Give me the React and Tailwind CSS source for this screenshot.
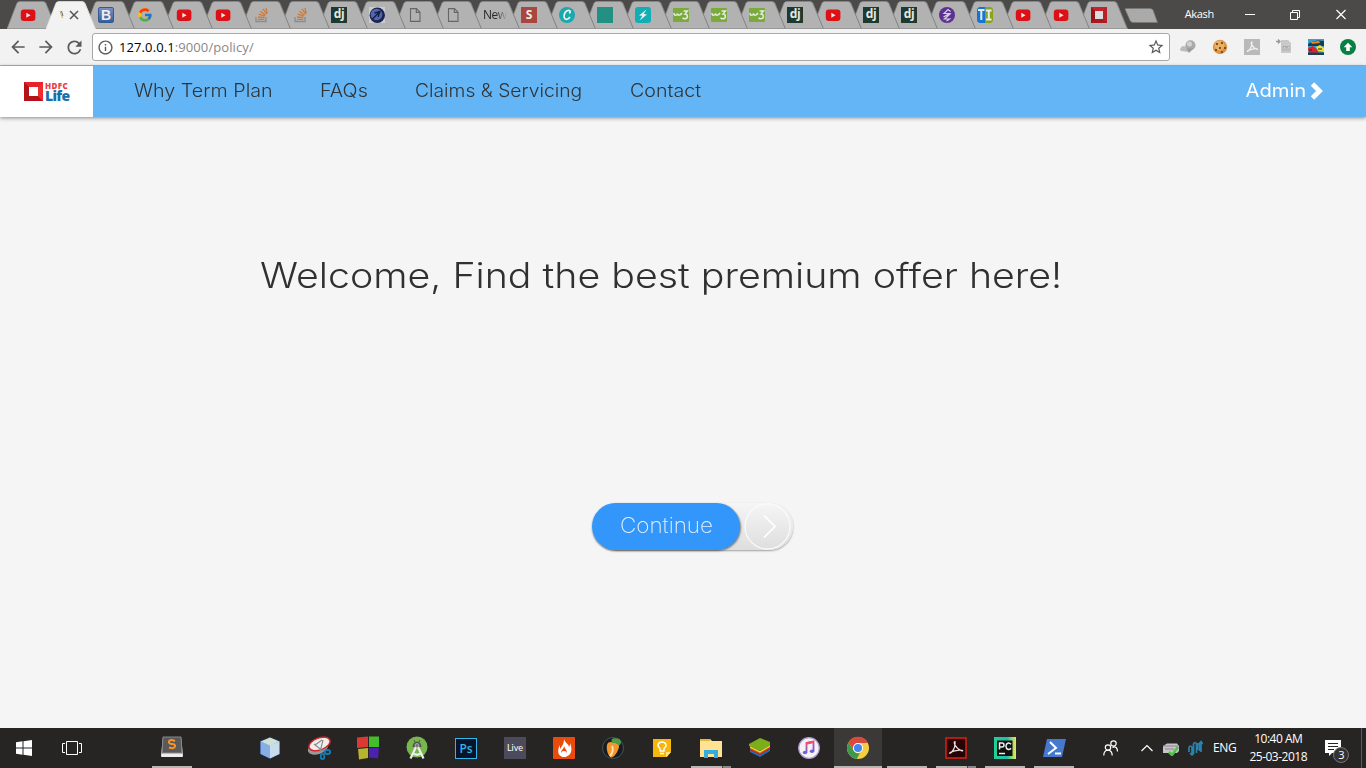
import React from "react";
import { FcGoogle } from "react-icons/fc";
import { MdArrowBack, MdArrowForward, MdRefresh, MdStarBorder, MdInfoOutline } from "react-icons/md";

const Svg = ({ s = 16, vb = "0 0 16 16", children, className = "" }) => (
  <svg width={s} height={s} viewBox={vb} fill="none" className={`shrink-0 ${className}`}>{children}</svg>
);

/* ---------- favicons ---------- */
const YouTube = () => (
  <Svg><rect x="0.800" y="2.500" width="14.600" height="11.500" rx="3" fill="#dd1016" /><path d="M6.300 5.700v5l4.300-2.500z" fill="#f3e4e4" /></Svg>
);
const Django = () => (
  <div className="h-4 w-4 bg-[#20392f] text-center font-['Open_Sans',sans-serif] text-[12px] font-bold leading-[14px] tracking-[-0.3px] text-[#e4e8e6]">dj</div>
);
const Bootstrap = () => (
  <div className="h-4 w-4 rounded-[2px] border border-[#345a94] bg-linear-to-b from-[#7d8cc4] to-[#30609c] text-center font-['Liberation_Sans',sans-serif] text-[14px] font-bold leading-[14px] text-[#eee]">B</div>
);
const Stack = () => (
  <Svg>
    <path d="M2 10v4.500h10V10" stroke="#8c8c8c" strokeWidth="1.300" />
    <path d="M4 12.400h6.300M4 10l6.400.7M4.700 7.200l6 2M6.300 4.300l5.200 4M9 1.900l3.700 5.300M12 .8l1.200 5.800" stroke="#d27a35" strokeWidth="1.300" />
  </Svg>
);
const Page = () => (
  <Svg><path d="M3.500 1.600h6l3.500 3.600v9.200H3.500zM9.300 1.800v3.600h3.500" stroke="#666" strokeWidth="1.100" /></Svg>
);
const Jet = () => (
  <Svg><path d="M0 0h16v16H0z" fill="#ccc" /><circle cx="8.300" cy="8.300" r="7.700" fill="#1c2552" /><circle cx="7.500" cy="7.500" r="5.800" fill="#5268ae" /><path d="M3.500 12l7.500-7.500M5.500 6l5.500-1.500L9 10" stroke="#141c40" strokeWidth="1.300" /></Svg>
);
const Red = () => (
  <div className="h-4 w-4 bg-[#a8463f] text-center font-['Open_Sans',sans-serif] text-[12px] font-bold leading-4 text-[#eee]">S</div>
);
const TealC = () => (
  <Svg><circle cx="8" cy="8" r="8" fill="#18a9ae" /><path d="M10.200 6.300C12.500 4.500 10.500 2.500 8 3.700 4.500 5.500 4 12.300 7.300 12.300c1.500 0 2.700-.8 3.700-2.200" stroke="#e6f1f1" strokeWidth="1.700" /></Svg>
);
const Teal = () => <div className="h-4 w-4 bg-[#229184]" />;
const Bolt = () => (
  <Svg><rect width="16" height="16" rx="3" fill="#14adb3" /><path d="M11.500 2.500L4 8.400l3.400.4L4.500 13.500 12 7.600l-3.400-.5z" fill="#e9f2f2" /></Svg>
);
const W3 = () => (
  <Svg><rect y="1" width="16" height="14" rx="1" fill="#79aa3b" /><path d="M1 6c0 3 3 3 3.400.5C5 9 7.500 8.500 9 6M10.500 4h4L12 7c3 0 3.500 4.800-.5 4.800-.8 0-1.500-.5-1.800-1.200" stroke="#e4ecd9" strokeWidth="1.500" /></Svg>
);
const Purple = () => (
  <Svg><circle cx="8" cy="8" r="8" fill="#5b3191" /><path d="M11.500 4.500L9 2.500 5 6.500h5.500L4.500 10M11.500 6.500L5.500 12h5l-3 2" stroke="#d8cfe2" strokeWidth="1.200" /></Svg>
);
const TI = () => (
  <Svg><path d="M2 0h6v16H2L0 14V2z" fill="#1575d3" /><path d="M8 0h6l2 2v12l-2 2H8z" fill="#89a31b" /><path d="M1 3h6.500M4.300 3v10M9 3.600h5.600M9 12.400h5.600M11.800 3.500v9" stroke="#e7ebee" strokeWidth="2" /></Svg>
);
const Hdfc = () => (
  <Svg><path d="M0 0h16v16H0z" fill="#c3242c" /><path d="M0 0l16 16H0z" fill="#97151c" /><path d="M0 16l16-16v16z" fill="#b31f27" opacity=".6" /><path d="M4 4h8v8H4z" fill="#ddd" /></Svg>
);

const TABS = [
  [39, YouTube], [39, null], [39, Bootstrap], [39, () => <FcGoogle size={16} />], [39, YouTube], [39, YouTube], [39, Stack], [38, Stack],
  [38, Django], [38, Jet], [38, Page], [38, Page], [38, "New"], [38, Red], [38, TealC], [38, Teal], [38, Bolt], [38, W3], [38, W3], [38, W3],
  [38, Django], [38, YouTube], [38, Django], [38, Django], [38, Purple], [38, TI], [38, YouTube], [38, YouTube], [38, Hdfc],
];

function Tab({ width, icon: Icon, index }) {
  const active = index === 1;
  return (
    <div className="relative h-[29px] shrink-0" style={{ width, zIndex: active ? 50 : 40 - index }}>
      <svg width="50" height="29" className="absolute left-0 top-0">
        <path d="M0 29L10 3Q11 1.500 13 1.500H36Q38 1.500 39 3.500L49.500 29z" fill={active ? "#f2f2f2" : "#b2b2b2"} />
        <path d="M0 29L10 3Q11 1.500 13 1.500H36" stroke={active ? "#e8e8e8" : "#8b8b8b"} strokeWidth=".7" fill="none" />
        <path d="M36 1.500Q38 1.500 39 3.500L49.500 29" stroke={active ? "#ddd" : "#828282"} strokeWidth="1" fill="none" />
        {!active && <path d="M0 28.500H49.500" stroke="#999" />}
      </svg>
      <div className="relative flex h-[29px] items-center pl-[13px] pt-[1px]">
        {active ? (
          <>
            <svg width="6" height="14" className="mr-[4px]"><path d="M1 3l2.500 7" stroke="#dfa53c" /><path d="M2.500 3L4 8" stroke="#36527a" strokeWidth=".8" /></svg>
            <Svg s={10} vb="0 0 10 10"><path d="M1 1l8 8M9 1L1 9" stroke="#555" strokeWidth="1.500" /></Svg>
          </>
        ) : Icon === "New" ? (
          <span className="whitespace-nowrap bg-linear-to-r from-[#222] from-50% to-[#b2b2b2] bg-clip-text font-['Open_Sans',sans-serif] text-[12px] leading-4 tracking-[-0.5px] text-transparent">New</span>
        ) : (
          <Icon />
        )}
      </div>
    </div>
  );
}

function TabStrip() {
  return (
    <div className="flex h-[29px] bg-[#4c4a48] pl-[7px]">
      {TABS.map(([w, icon], i) => <Tab key={i} width={w} icon={icon} index={i} />)}
      <svg width="36" height="29" className="ml-[7px] shrink-0">
        <path d="M3 8.500H27Q29 8.500 30 10L34.500 22.500H10Q8 22.500 7 20.500L2 9z" fill="#aaa" stroke="#777" strokeWidth=".6" />
      </svg>
      <div className="flex flex-1 items-center justify-end font-['Open_Sans',sans-serif] text-[11px] text-white">
        <span className="mr-[30px] tracking-[-0.3px]">Akash</span>
        <svg width="12" height="12" className="mr-[33px]"><path d="M1 5.500h10" stroke="#fff" /></svg>
        <svg width="12" height="12" className="mr-[34px]" fill="none"><path d="M1.500 3.500h7v7h-7zM3.500 3.500v-2h7v7h-2" stroke="#fff" /></svg>
        <svg width="12" height="12" className="mr-[19px]"><path d="M1.500 1l9 9M10.500 1l-9 9" stroke="#fff" strokeWidth="1.200" /></svg>
      </div>
    </div>
  );
}

function Toolbar() {
  return (
    <div className="flex h-[37px] items-center border-b border-[#b3b3b3] bg-[#f2f2f2] text-[#5a5a5a]">
      <MdArrowBack size={20} className="ml-[8px]" />
      <MdArrowForward size={20} className="ml-[8px]" />
      <MdRefresh size={21} className="ml-[8px]" />
      <div className="ml-[7px] flex h-7 w-[1078px] items-center rounded-[3px] border border-[#a8a8a8] bg-white pr-[4px]">
        <MdInfoOutline size={17} className="ml-[4px]" />
        <span className="ml-[5px] flex-1 font-['Open_Sans',sans-serif] text-[13px] leading-5 tracking-[0.1px] text-[#888]"><span className="text-black">127.0.0.1</span>:9000/policy/</span>
        <MdStarBorder size={18} />
      </div>
      <div className="ml-[10px] flex gap-4">
        <Svg><path d="M1 12c-2-2 0-5 3-5l4 1 1 5z" fill="#bbb" /><circle cx="10.500" cy="6.200" r="5" fill="#aaa" /><circle cx="9.500" cy="5" r="2.500" fill="#d2d2d2" /><path d="M6.500 9.500h7L9 14z" fill="#999" /></Svg>
        <Svg><circle cx="8" cy="8" r="7.200" fill="#da9444" /><circle cx="7.500" cy="6.500" r="5" fill="#e7b167" /><path d="M4 4h2v2H4zM9 3h2v2H9zM7 8h2v2H7zM12 8h2v2h-2zM3 10h2v2H3zM9 12h2v2H9z" fill="#884c1f" /></Svg>
        <Svg><path d="M0 0h16v16H0z" fill="#b9b9b9" /><path d="M8 3c-2 0-.5 5 5 7.500 2-1-4-2-9.500 1.500-1 2 5-3 4.500-9z" stroke="#f2f2f2" strokeWidth="1.200" /></Svg>
        <Svg><path d="M5 1h7l3 3v10H5z" fill="#c9c9c9" /><path d="M0 2.500h4M2 .5l2 2-2 2" stroke="#999" strokeWidth="1.300" /><path d="M6.500 7h7v4.500h-7z" fill="#aaa" /><path d="M8 11V8.500h1M10 8.500V11M12 11V8.500h1" stroke="#eee" strokeWidth=".6" /></Svg>
        <Svg><path d="M0 0h16v16H0z" fill="#3aa0cb" /><path d="M0 5q7-5 16-3v5H0z" fill="#1c3c56" /><path d="M3 3l8-1 1 2-8 .8z" fill="#f08a28" /><path d="M0 9l5-2 5 4v3H1z" fill="#db2431" /><path d="M8 8l4-2 4 3v4l-6-1z" fill="#ebdf31" /><path d="M0 13.500h16V16H0z" fill="#213e4e" /><path d="M1 11h3M10 10h4" stroke="#222" /></Svg>
        <Svg><circle cx="8" cy="8" r="8" fill="#098043" /><path d="M8 3.700L3.700 8.300h2.500V12h3.600V8.300h2.500z" fill="#fff" /></Svg>
      </div>
    </div>
  );
}

function NavBar() {
  return (
    <nav className="relative z-10 flex h-[51px] items-center whitespace-nowrap bg-[#64b5f6] font-['Inter',sans-serif] text-[18px] font-light leading-6 text-[#2f3437] shadow-[0_1px_4px_rgba(0,0,0,0.45)]">
      <div className="flex h-full w-[93px] items-center gap-[2px] bg-white pl-6">
        <Svg s={19} vb="0 0 19 19"><path d="M0 0h19v19H0z" fill="#e62329" /><path d="M0 0l19 19H0z" fill="#b51218" /><path d="M19 0v19L10 10z" fill="#ee2c31" /><path d="M5 5h9v9H5z" fill="#fff" /></Svg>
        <div className="flex flex-col font-['Open_Sans',sans-serif] font-extrabold">
          <span className="text-[8px] leading-[8px] tracking-[0.4px] text-[#ec3e45]">HDFC</span>
          <span className="text-[14px] leading-[12px] tracking-[-0.7px] text-[#1770ae]">Life</span>
        </div>
      </div>
      <div className="flex flex-1 items-center pb-[2px]">
        <span className="ml-[41px] w-[186px] origin-left scale-x-[1.095]">Why Term Plan</span>
        <span className="w-[95px] origin-left scale-x-[1.1]">FAQs</span>
        <span className="w-[215px] origin-left scale-x-[1.07]">Claims &amp; Servicing</span>
        <span className="origin-left scale-x-[1.09]">Contact</span>
        <span className="ml-auto origin-right scale-x-[1.12] font-normal text-white">Admin</span>
        <svg width="13" height="18" className="ml-[4px] mr-[43px]"><path d="M2.500 2l7 7-7 7" stroke="#fff" strokeWidth="4.800" fill="none" /></svg>
      </div>
    </nav>
  );
}

/* ---------- taskbar ---------- */
const I = ({ children }) => <Svg s={24} vb="0 0 24 24">{children}</Svg>;
const APPS = [
  [<I><path d="M12 1l10 4v13l-10 5-10-5V5z" fill="#203f78" /><path d="M2.500 5.500L12 9v13.500l-9.500-4.500z" fill="#88aee5" /><path d="M21.500 5.500L12 9v13.500l9.500-4.500z" fill="#c7dcec" /><path d="M12 1.500l9.500 4L12 9.500l-9.500-4z" fill="#cfe3d5" /></I>],
  [<I><ellipse cx="11" cy="12" rx="10.500" ry="6" transform="rotate(-20 11 12)" fill="#999" /><ellipse cx="12.500" cy="8" rx="11" ry="6" transform="rotate(-20 12.500 8)" fill="#eee" stroke="#d9252b" strokeWidth="1.500" /><path d="M7 8l10 8M16 4l-3 12M8 9l7-5" stroke="#888" strokeWidth="1.100" /><ellipse cx="20.500" cy="16" rx="2.800" ry="2" stroke="#147db5" strokeWidth="1.800" /><ellipse cx="15.500" cy="20.500" rx="1.800" ry="2.600" stroke="#147db5" strokeWidth="1.800" /></I>],
  [<I><path d="M1 1.500l11-1V11L1 12z" fill="#dc3935" /><path d="M13 .5h10V11H13z" fill="#45bd2a" /><path d="M2 13l10-1v10L3 23.500z" fill="#b9b32d" /><path d="M13 12l10-.5-1 11-9-1z" fill="#4d21ad" /></I>],
  [<I><circle cx="12" cy="11" r="10.500" fill="#78b74e" /><path d="M9 4l1 2M15 4l-1 2" stroke="#555" /><path d="M7.500 11a4.500 5.500 0 019 0z" fill="#555" /><path d="M11 11L5.500 22.500M13 11l5.500 11.500M7.500 17q4.500 3.500 9 0" stroke="#eee" strokeWidth="2.200" /><circle cx="12" cy="9.500" r="2" fill="#777" stroke="#bbb" strokeWidth=".8" /></I>],
  [<div className="h-[21px] w-[22px] border border-[#31b7ea] bg-[#09142a] text-center font-['Open_Sans',sans-serif] text-[12px] font-semibold leading-[19px] text-[#31b7ea]">Ps</div>],
  [<div className="h-[22px] w-[22px] bg-[#4b4b5b] text-center font-['Lato',sans-serif] text-[9px] leading-[22px] text-white">Live</div>],
  [<I><rect x="1" y="1" width="22" height="22" rx="1" fill="#e84b0c" /><path d="M12 3c1 4 5 5 5 8 1-1 1-3 1-4 4 9-1 14-6 14S4 16 8 9v4c2-3 4-5 4-10z" fill="#fff" /><path d="M12 10c1 3 3 4 3 7H9c0-3 3-4 3-7z" fill="#e84b0c" /><circle cx="12" cy="18" r="3" fill="#fff" /></I>],
  [<I><circle cx="12" cy="12" r="10.500" fill="#161c1f" stroke="#41545b" /><path d="M6 9c1-4 5-3 8-2 4 0 5 3 3 7-2 5-5 7.500-7 7.500C7 20 5 13 6 9z" fill="#f4962e" /><path d="M11 10c2 3 0 8-2 10" stroke="#ffe2a5" strokeWidth="2" /><path d="M11 7c-2-5 2-5 5-4.500 5 .5 5 5 2 7L15 7z" fill="#4f9c45" /></I>],
  [<I><path d="M3 3h18v13l-4 5H3z" fill="#f5b70a" /><path d="M21 16l-5 5v-5z" fill="#ffe38e" /><path d="M10 15v-2.500C6.500 10 8 6 12 6s5.500 4 2 6.500V15zM10 17.500h4" stroke="#fff" strokeWidth="1.400" /></I>],
  [<I><path d="M1 3h10l2 2h10v16H1z" fill="#ffe392" /><path d="M1 3h10v2H1z" fill="#e5b743" /><path d="M5 22v-8h14v8h-4v-4H9v4z" fill="#35ace0" /></I>, "split"],
  [<I><path d="M2 14l10 5 10-6v2l-10 6-10-5z" fill="#1672c9" /><path d="M2 12l10 5 10-6v2l-10 6-10-5z" fill="#dc2f26" /><path d="M2 10l10 5 10-6v2l-10 6-10-5z" fill="#ecd62b" /><path d="M1 8l11-6 10 4v3.500L12 15 1 10z" fill="#7cad1a" /></I>],
  [<I><defs><linearGradient id="note" y2="1" x2=".3"><stop stopColor="#ed4f75" /><stop offset="1" stopColor="#6c5dde" /></linearGradient></defs><circle cx="12" cy="12" r="10.300" fill="#f4f2f6" stroke="#b49bce" strokeWidth="1.200" /><path d="M9.500 16.500V7l7-1.500V15" stroke="url(#note)" strokeWidth="1.800" /><path d="M9 7.500l8-1.700" stroke="#ed4f75" strokeWidth="2.500" /><ellipse cx="8" cy="16.500" rx="2.200" ry="1.800" fill="#6c62dd" /><ellipse cx="15" cy="15.300" rx="2.200" ry="1.800" fill="#7559d6" /></I>],
  [<I><circle cx="12" cy="12" r="11" fill="#f5cd41" /><path d="M2.500 6.500A11 11 0 0122 7H12a5 5 0 00-4.500 7z" fill="#d84a3d" /><path d="M2.500 6.500l5.200 8A5 5 0 0014 16.700L10.800 23A11 11 0 012.500 6.500z" fill="#40984c" /><circle cx="12" cy="12" r="5" fill="#fff" /><circle cx="12" cy="12" r="4" fill="#4285f4" /></I>, "active"],
  [null, "line"],
  [<I><path d="M2 2h20v20H2z" fill="#280305" stroke="#dd210f" strokeWidth="1.500" /><path d="M11 5.500c-2 0 0 7 7 9.500 3-1-5-2-12 1.500-2 3 6-2 5-11z" stroke="#e8e0df" strokeWidth="1.200" /></I>, "split"],
  [<I><defs><linearGradient id="pc"><stop stopColor="#20d193" /><stop offset=".6" stopColor="#24bdae" /><stop offset="1" stopColor="#eee84b" /></linearGradient></defs><path d="M1 1h22v22H1z" fill="url(#pc)" /><path d="M4 4.500h15.500V20H4z" fill="#111" /><path d="M6 17.500h6M6.500 13.500V7H9q2 0 2 2t-2 2H7M18 8.300C16 6 13 7 13 10.200s3 4.300 5 2" stroke="#eee" strokeWidth="1.500" /></I>, "line"],
  [<I><path d="M5 3h19l-4 18H1z" fill="#4679cd" /><path d="M8 6l6 6-8 6M13 17.500h6" stroke="#fff" strokeWidth="2" /></I>, "line"],
];

function Taskbar() {
  return (
    <div className="flex h-10 bg-[#262524] font-['Open_Sans',sans-serif] text-white">
      <div className="flex w-12 items-center justify-center"><Svg><path d="M0 2.300l6.500-1V7.500H0zM7.500 1.200L16 0v7.500H7.500zM0 8.500h6.500v6.200L0 13.800zM7.500 8.500H16V16l-8.500-1.200z" fill="#fff" /></Svg></div>
      <div className="flex w-12 items-center justify-center"><svg width="20" height="16" fill="none" stroke="#fff"><path d="M4.500 1.500h11v13h-11zM3 3.500H.5v9H3M17 3.500h2.500v9H17" /></svg></div>
      <div className="ml-[52px] flex w-12 flex-col items-center">
        <div className="flex h-[38px] items-center pt-[2px]"><I><path d="M3 1h18l2 19q0 1-1 1H2q-1 0-1-1z" fill="#eee" /><path d="M3 1h18l1 16H2z" fill="#595959" stroke="#888" /><path d="M15 5c-7-3-8 3-3 3s4 6-3 3.500" stroke="#f7942b" strokeWidth="2" /></I></div>
        <div className="h-[2px] w-10 bg-[#b8b6b2]" />
      </div>
      <div className="ml-[50px] flex gap-px">
        {APPS.map(([icon, state], i) => (
          <div key={i} className={`flex w-12 flex-col items-center ${state === "active" ? "bg-[#3a3938]" : ""}`}>
            <div className="flex h-[38px] items-center pt-[2px]">{icon}</div>
            {state && (
              <div className={`flex h-[2px] bg-[#b8b6b2] ${state === "active" ? "w-12" : "w-10"}`}>
                {state === "split" && <div className="ml-auto h-[2px] w-[9px] border-l border-[#444] bg-[#888]" />}
              </div>
            )}
          </div>
        ))}
      </div>
      <div className="ml-[25px] flex flex-1 items-center">
        <svg width="16" height="16" className="shrink-0" fill="none" stroke="#fff" strokeWidth="1.200"><circle cx="5" cy="7.500" r="2.700" /><path d="M.8 15.500c0-7 8.400-7 8.400 0" /><circle cx="10.500" cy="3.500" r="2.700" /><path d="M9.500 7.500c3-2 5 .5 5 4" /></svg>
        <svg width="12" height="8" className="ml-[22px] shrink-0" fill="none" stroke="#fff" strokeWidth="1.200"><path d="M.5 7L6 1.500 11.500 7" /></svg>
        <Svg className="ml-[10px]"><path d="M0 6l4-2.500h10l2 2.500v5l-2 2H0z" fill="#c7c3cb" /><path d="M0 6h15M2 9h9" stroke="#777" strokeWidth=".8" /><path d="M6 12l3 3 6-8" stroke="#4cc63e" strokeWidth="2.600" /></Svg>
        <Svg className="ml-[8px]"><path d="M2 12V7.500q1.500-3 3 0V14M6.500 14V4q1.500-3 3 0v9M10.500 10V4q2-1 2 2v5M14 12V3M3 13l2 2 2-2M12 4l2-2.500L16 4" stroke="#2684ae" strokeWidth="1.700" /></Svg>
        <span className="ml-[10px] text-[12px] tracking-[-0.4px]">ENG</span>
        <div className="ml-[12px] w-[60px] whitespace-nowrap text-center text-[12px] leading-[18px] tracking-[-0.5px]"><div>10:40 AM</div><div>25-03-2018</div></div>
        <div className="relative ml-[17px] h-[30px] w-[26px] shrink-0">
          <svg width="26" height="30"><path d="M0 7h16v13h-9l-3 3v-3H0z" fill="#fff" /><path d="M3 10.500h10M3 13.500h10M3 16.500h6" stroke="#262524" /><circle cx="16" cy="22" r="7.500" fill="#333" stroke="#777" /></svg>
          <span className="absolute left-[13px] top-[14px] text-[11px] leading-4">3</span>
        </div>
        <div className="ml-[10px] h-10 w-px bg-[#5c5b5a]" />
      </div>
    </div>
  );
}

export default function App() {
  return (
    <div className="flex h-[768px] w-[1366px] flex-col overflow-hidden bg-[#f5f5f5]">
      <TabStrip />
      <Toolbar />
      <NavBar />
      <main className="flex flex-1 flex-col">
        <h1 className="ml-[260px] mt-[134px] w-fit origin-left scale-x-[1.123] whitespace-nowrap font-['Inter',sans-serif] text-[35px] font-light leading-[48px] text-[#303030]">Welcome, Find the best premium offer here!</h1>
        <button className="ml-[592px] mt-[204px] flex h-[47px] w-[201px] items-center rounded-full bg-linear-to-b from-[#f5f5f5] to-[#dedede] shadow-[0_1px_2px_rgba(0,0,0,0.35)]">
          <span className="flex h-full w-[148px] items-center justify-center rounded-full bg-[#3296fb] pb-[1px] font-['Inter',sans-serif] text-[21px] font-extralight text-[#e4f0fb] shadow-[1px_1px_2px_rgba(0,0,0,0.45)]"><span className="scale-x-[1.07]">Continue</span></span>
          <svg width="48" height="47" className="ml-[3px]" fill="none"><circle cx="24.500" cy="23.500" r="22.500" stroke="#fafafa" strokeWidth="1.300" /><path d="M21 12.500l11 11-11 11" stroke="#fff" strokeWidth="1.700" /></svg>
        </button>
      </main>
      <Taskbar />
    </div>
  );
}
